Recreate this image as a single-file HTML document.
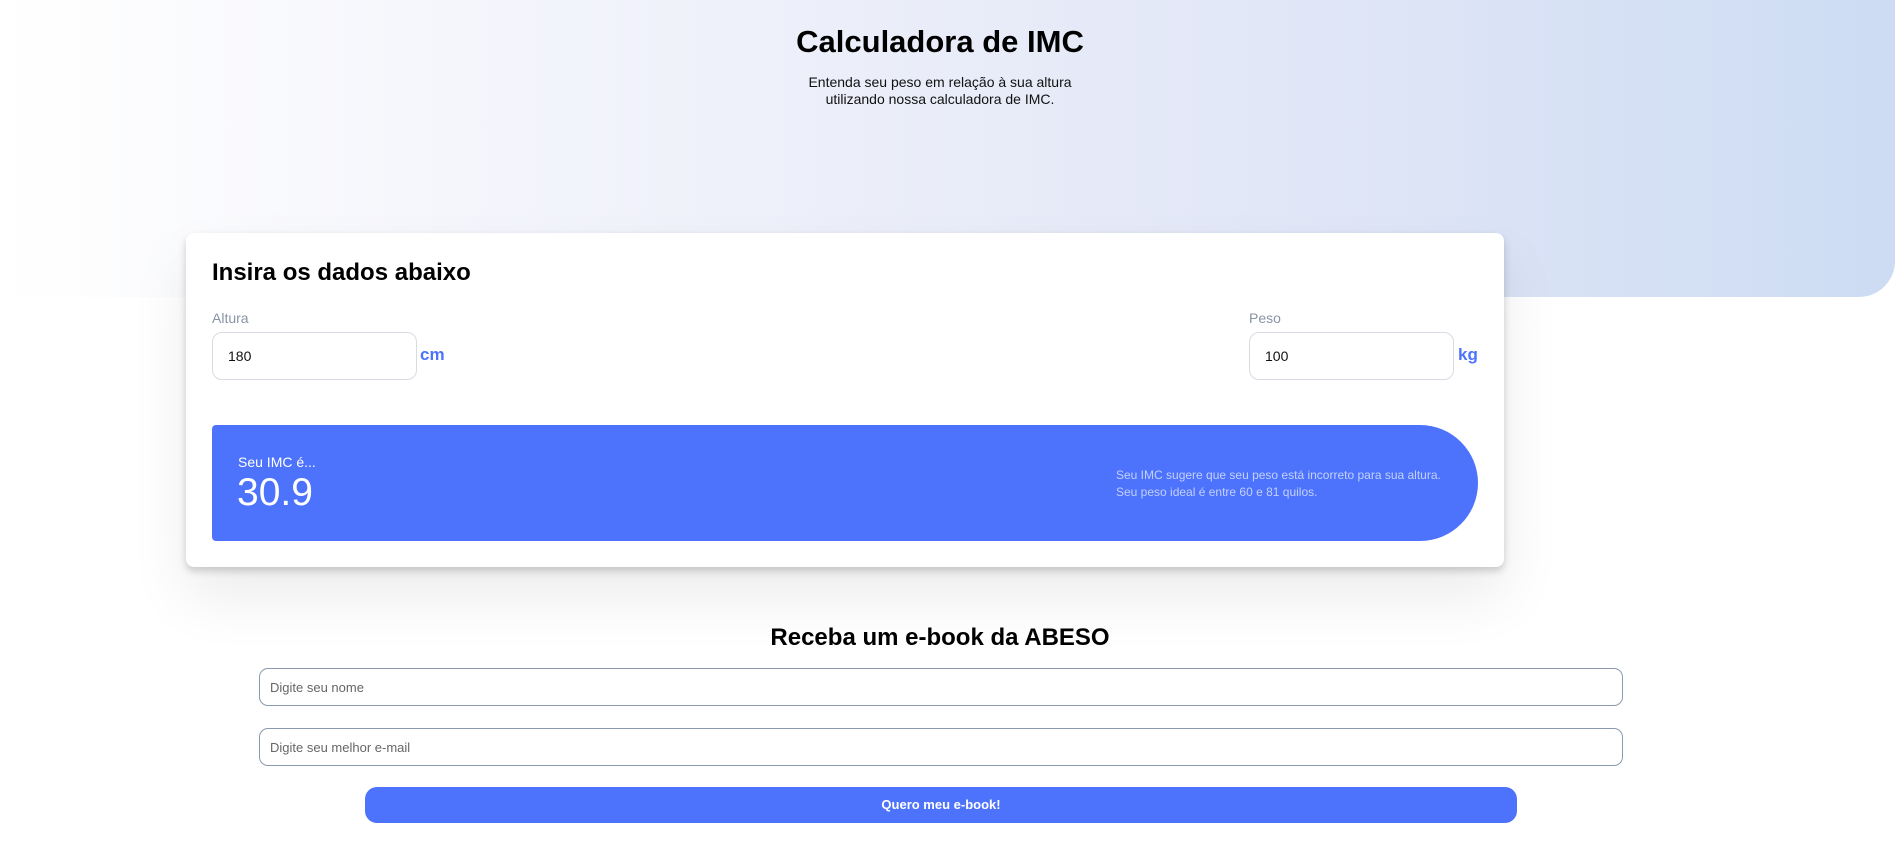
<!DOCTYPE html>
<html><head><meta charset="utf-8"><style>
*{box-sizing:border-box;margin:0;padding:0}
body{width:1895px;height:859px;background:#fff;font-family:"Liberation Sans",sans-serif;position:relative;overflow:hidden}
.bg{position:absolute;left:0;top:0;width:1895px;height:297px;border-bottom-right-radius:36px;background:linear-gradient(90deg,#fff 0%,#eef0fa 40%,#e0e6f7 70%,#cddcf3 100%)}
.abs{position:absolute}
h1{position:absolute;left:0;width:1880px;text-align:center;top:24px;font-size:31px;font-weight:bold;color:#000}
.sub{position:absolute;left:0;width:1880px;text-align:center;top:74px;font-size:14px;line-height:17px;color:#111}
.card{position:absolute;left:186px;top:233px;width:1318px;height:334px;background:#fff;border-radius:8px;box-shadow:0 30px 60px rgba(0,0,0,.08),0 4px 8px rgba(0,0,0,.18)}
.lbl{position:absolute;font-size:14px;color:#8a94a6}
.inp{position:absolute;width:205px;height:48px;border:1px solid #d6dbe3;border-radius:10px;font-size:14px;padding:15px 15px;color:#111}
.unit{position:absolute;font-size:17px;font-weight:bold;color:#4d73fc}
.res{position:absolute;left:212px;top:425px;width:1266px;height:116px;background:#4d73fc;border-radius:4px 58px 58px 4px;color:#fff}
.f{position:absolute;height:38px;border:1px solid #8a9aae;border-radius:9px;font-size:13px;color:#666;padding:11px 10px;left:259px;width:1364px}
.btn{position:absolute;left:365px;top:787px;width:1152px;height:36px;background:#4d73fc;border-radius:12px;color:#fff;font-weight:bold;font-size:13px;text-align:center;line-height:36px}
</style></head><body>
<div class="bg"></div>
<h1>Calculadora de IMC</h1>
<div class="sub">Entenda seu peso em relação à sua altura<br>utilizando nossa calculadora de IMC.</div>
<div class="card"></div>
<div class="abs" style="left:212px;top:259px;font-size:24px;font-weight:bold">Insira os dados abaixo</div>
<div class="lbl" style="left:212px;top:310px">Altura</div>
<div class="inp" style="left:212px;top:332px">180</div>
<div class="unit" style="left:420px;top:345px">cm</div>
<div class="lbl" style="left:1249px;top:310px">Peso</div>
<div class="inp" style="left:1249px;top:332px">100</div>
<div class="unit" style="left:1458px;top:345px">kg</div>
<div class="res">
<div class="abs" style="left:26px;top:29px;font-size:14px">Seu IMC é...</div>
<div class="abs" style="left:25px;top:46px;font-size:39px">30.9</div>
<div class="abs" style="left:904px;top:42px;font-size:12px;line-height:17px;color:#c3d0ff">Seu IMC sugere que seu peso está incorreto para sua altura.<br>Seu peso ideal é entre 60 e 81 quilos.</div>
</div>
<div class="abs" style="left:0;width:1880px;text-align:center;top:624px;font-size:24px;font-weight:bold">Receba um e-book da ABESO</div>
<div class="f" style="top:668px">Digite seu nome</div>
<div class="f" style="top:728px">Digite seu melhor e-mail</div>
<div class="btn">Quero meu e-book!</div>
</body></html>
